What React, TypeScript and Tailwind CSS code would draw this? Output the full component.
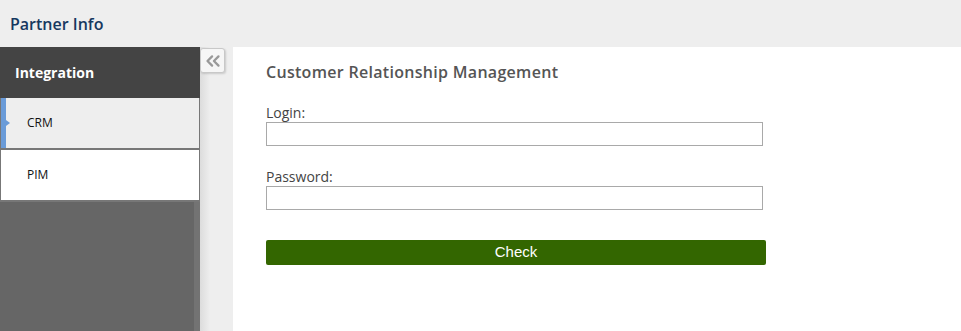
import { ChevronsLeft } from 'lucide-react'

const FONT = "font-['Open_Sans',sans-serif]"

function SideItem({ label, active }: { label: string; active?: boolean }) {
  return (
    <div
      className={`relative flex h-[52px] shrink-0 items-center border-x border-b-2 border-[#777] pl-[26px] text-[12px] text-[#111] ${
        active ? 'bg-[#eeeeee]' : 'bg-white'
      }`}
    >
      {active ? (
        <>
          <span className="absolute inset-y-0 left-0 w-[5px] bg-[#6a9bd8]" />
          <span className="absolute left-[5px] top-1/2 -mt-[3px] h-0 w-0 border-y-[3px] border-l-[4px] border-y-transparent border-l-[#6a9bd8]" />
        </>
      ) : null}
      {label}
    </div>
  )
}

function Field({ label, type }: { label: string; type: string }) {
  return (
    <label className="flex flex-col">
      <span className="text-[14px] leading-[17px] text-[#444]">{label}</span>
      <input
        type={type}
        className="mt-[1px] h-[24px] w-[497px] border border-[#a9a9a9] bg-white px-1 text-[13px] outline-none"
      />
    </label>
  )
}

export default function App() {
  return (
    <div className={`flex h-[331px] w-[961px] flex-col overflow-hidden bg-[#eeeeee] ${FONT}`}>
      <header className="flex h-[47px] shrink-0 items-center px-[10px]">
        <h1 className="text-[16px] font-semibold text-[#16385f]">Partner Info</h1>
      </header>

      <div className="flex min-h-0 flex-1">
        <aside className="flex w-[200px] shrink-0 flex-col bg-[#666]">
          <div className="flex h-[51px] shrink-0 items-center bg-[#444] pl-[15px] text-[14px] font-bold text-white">
            Integration
          </div>
          <SideItem label="CRM" active />
          <SideItem label="PIM" />
          <div className="flex flex-1 justify-end">
            <div className="w-[6px] bg-[#737373]" />
          </div>
        </aside>

        <div className="w-[33px] shrink-0 bg-[linear-gradient(to_right,#dcdcdc,#eeeeee_10px)] pt-px">
          <button
            type="button"
            className="flex h-[25px] w-[25px] items-center justify-center rounded-[3px] border border-[#c8c8c8] bg-[#f6f6f6] text-[#999] shadow-[1px_1px_2px_rgba(0,0,0,0.15)]"
          >
            <ChevronsLeft size={22} strokeWidth={2.5} />
          </button>
        </div>

        <main className="flex-1 bg-white pl-[33px] pt-[14px]">
          <h2 className="text-[16px] font-semibold leading-[22px] tracking-[0.3px] text-[#555]">
            Customer Relationship Management
          </h2>
          <div className="mt-[21px] flex flex-col gap-[22px]">
            <Field label="Login:" type="text" />
            <Field label="Password:" type="password" />
          </div>
          <button
            type="button"
            className="mt-[30px] h-[25px] w-[500px] rounded-[2px] bg-[#336600] font-['Liberation_Sans',Arial,sans-serif] text-[15px] text-white"
          >
            Check
          </button>
        </main>
      </div>
    </div>
  )
}
